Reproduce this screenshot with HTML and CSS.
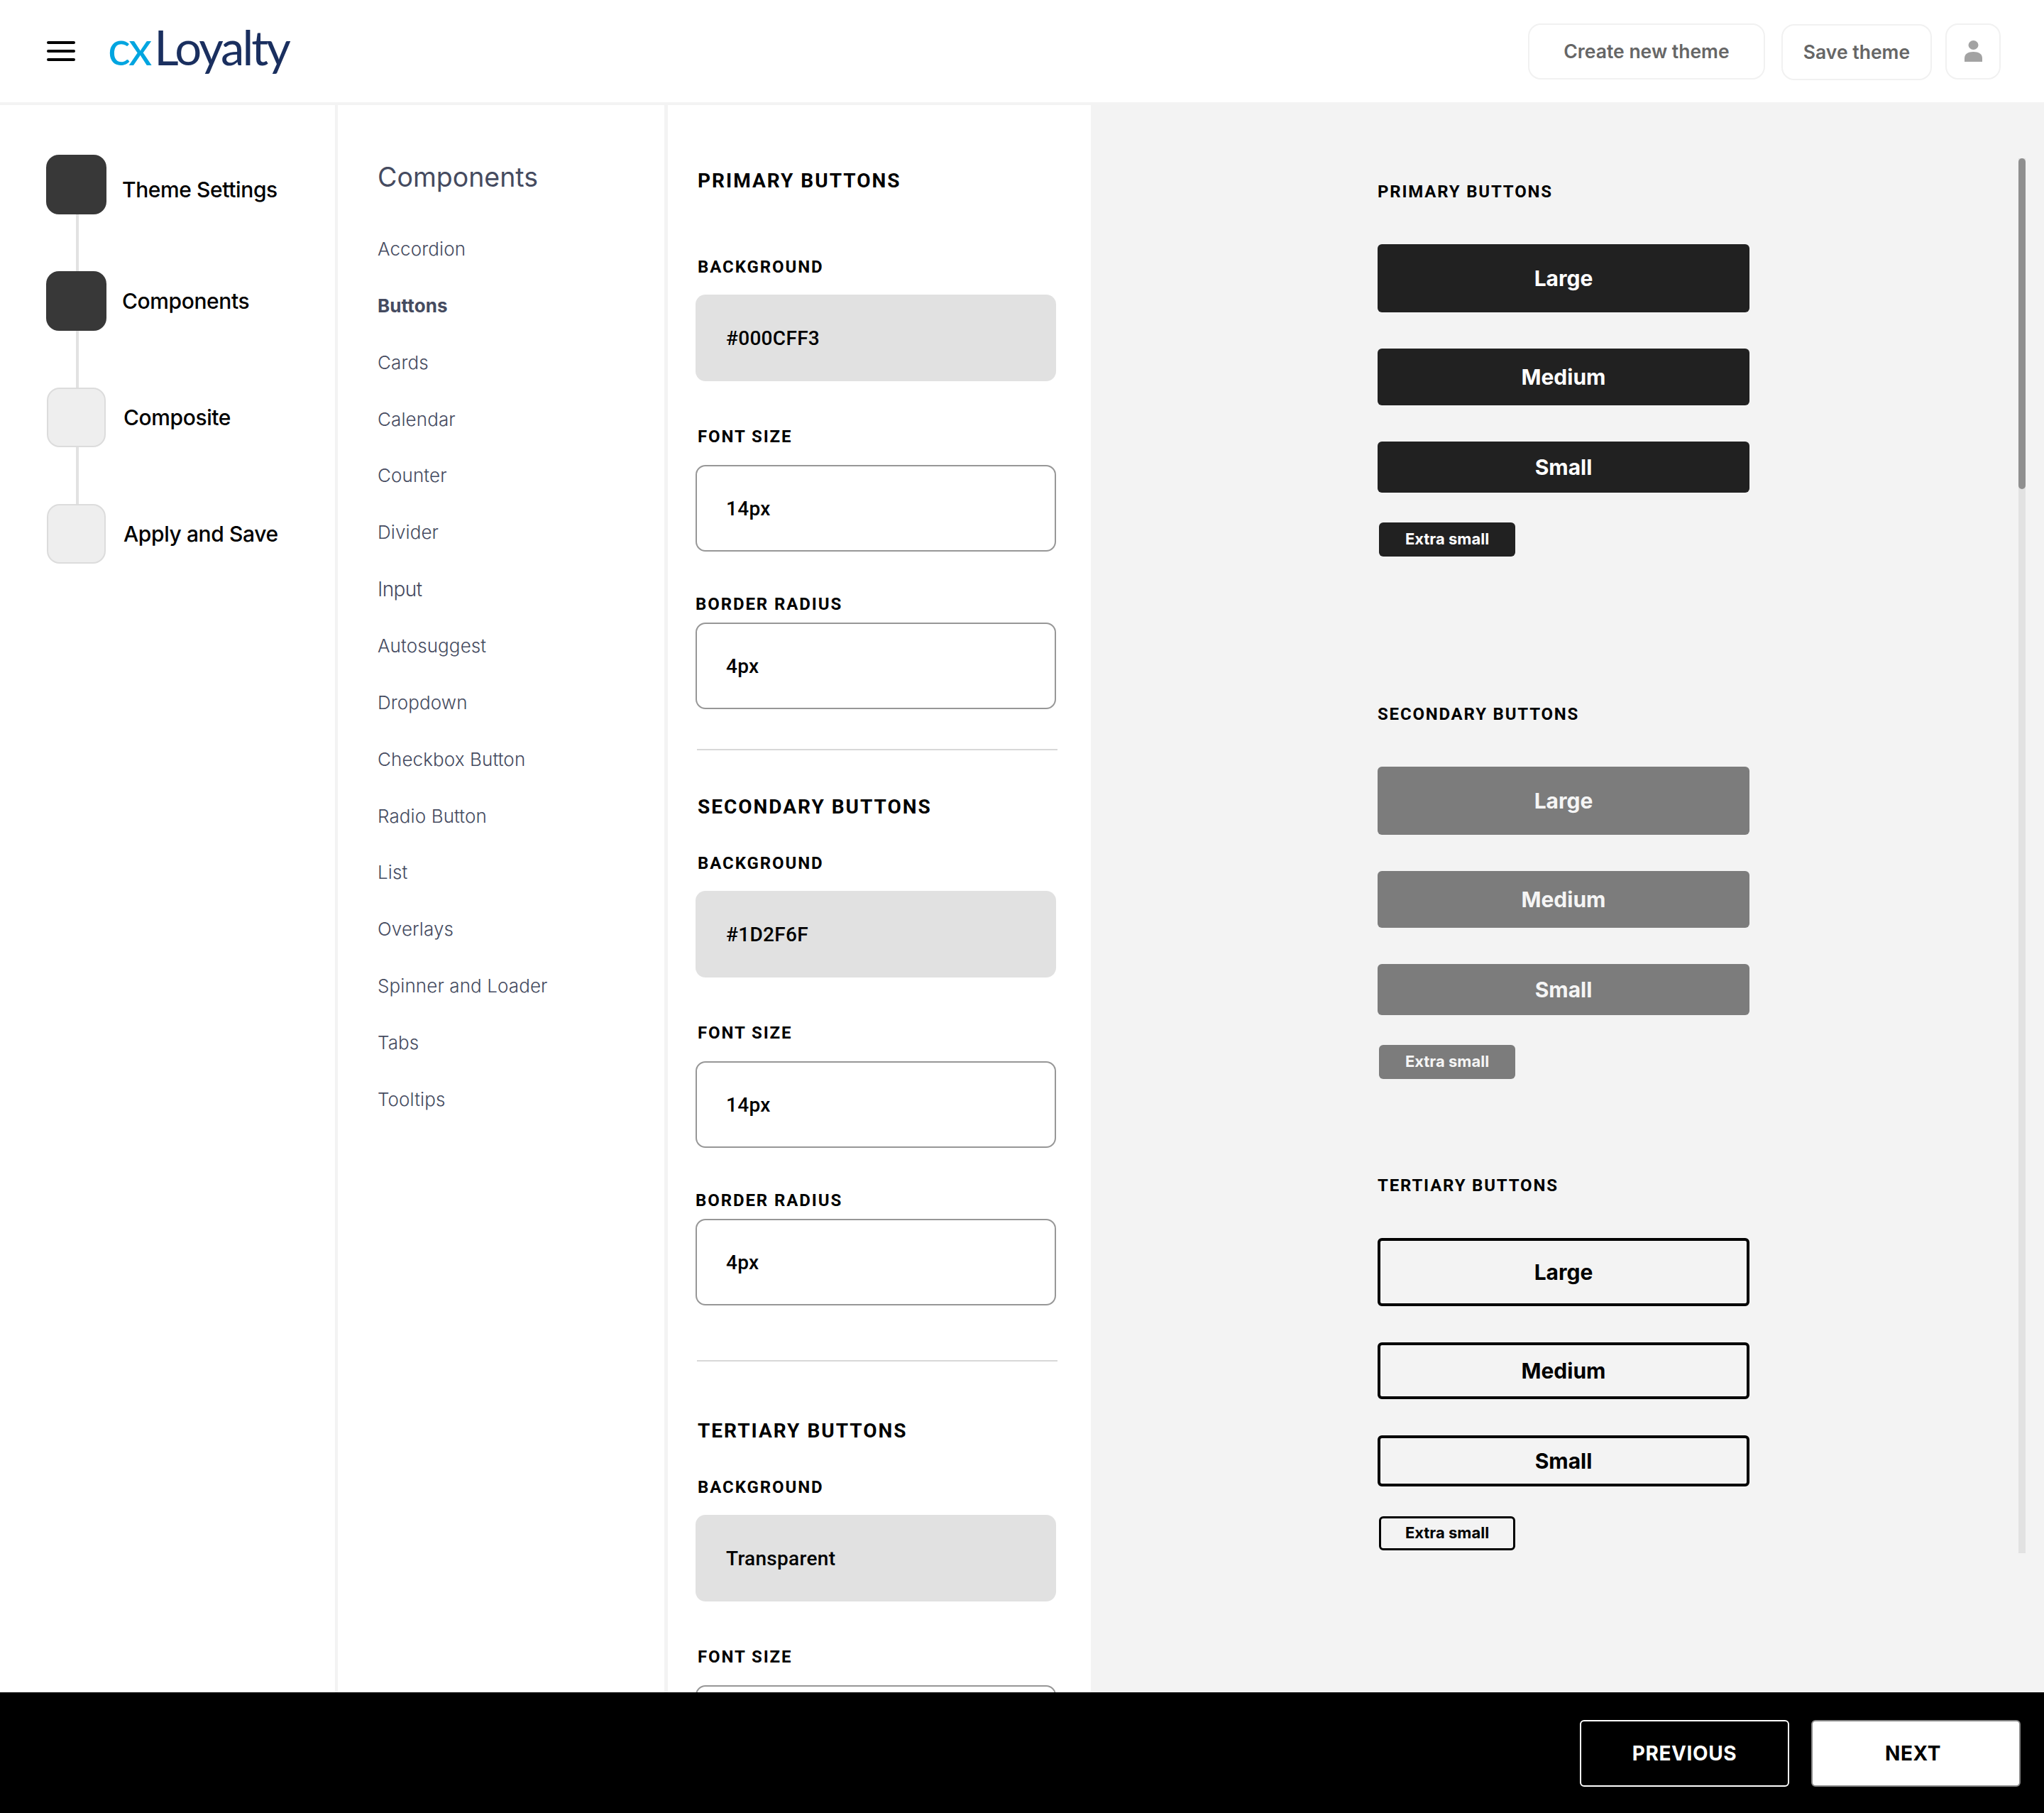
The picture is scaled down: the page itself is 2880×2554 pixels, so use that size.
FILE: index.html
```html
<!DOCTYPE html>
<html lang="en">
<head>
  <meta charset="UTF-8">
  <title>cxLoyalty Theme Builder</title>
  <link rel="stylesheet" href="styles.css">
</head>
<body>

  <header class="topbar">
    <div class="menu-icon"><span></span><span></span><span></span></div>
    <div class="logo"><span class="logo-cx">cx</span><span class="logo-name">Loyalty</span></div>
    <div class="topbar-actions">
      <button class="top-btn top-btn-create">Create new theme</button>
      <button class="top-btn top-btn-save">Save theme</button>
      <button class="top-btn top-btn-user">
        <svg width="25" height="30" viewBox="0 0 25 30"><ellipse cx="12.5" cy="6.5" rx="7" ry="6.5" fill="#a3a3a3"/><path d="M0 30 V25 C0 19 5 16 12.5 16 C20 16 25 19 25 25 V30 Z" fill="#a3a3a3"/></svg>
      </button>
    </div>
  </header>

  <main class="workspace">
    <nav class="steps">
      <div class="step step-done step-first"><div class="step-box"></div><span>Theme Settings</span></div>
      <div class="step step-done"><div class="step-box"></div><span>Components</span></div>
      <div class="step step-todo"><div class="step-box"></div><span>Composite</span></div>
      <div class="step step-todo step-last"><div class="step-box"></div><span>Apply and Save</span></div>
    </nav>

    <aside class="components">
      <h2>Components</h2>
      <ul>
        <li>Accordion</li>
        <li class="active">Buttons</li>
        <li>Cards</li>
        <li>Calendar</li>
        <li>Counter</li>
        <li>Divider</li>
        <li class="current">Input</li>
        <li>Autosuggest</li>
        <li>Dropdown</li>
        <li>Checkbox Button</li>
        <li>Radio Button</li>
        <li>List</li>
        <li>Overlays</li>
        <li>Spinner and Loader</li>
        <li>Tabs</li>
        <li>Tooltips</li>
      </ul>
    </aside>

    <section class="settings">
      <h3 class="settings-title settings-title-first">Primary buttons</h3>
      <label class="field-label">Background</label>
      <div class="field field-filled">#000CFF3</div>
      <label class="field-label">Font size</label>
      <div class="field">14px</div>
      <label class="field-label field-label-radius">Border radius</label>
      <div class="field">4px</div>
      <hr class="divider">

      <h3 class="settings-title">Secondary buttons</h3>
      <label class="field-label">Background</label>
      <div class="field field-filled">#1D2F6F</div>
      <label class="field-label">Font size</label>
      <div class="field">14px</div>
      <label class="field-label field-label-radius">Border radius</label>
      <div class="field">4px</div>
      <hr class="divider divider-wide">

      <h3 class="settings-title">Tertiary buttons</h3>
      <label class="field-label">Background</label>
      <div class="field field-filled">Transparent</div>
      <label class="field-label">Font size</label>
      <div class="field">14px</div>
    </section>

    <section class="preview">
      <h4 class="preview-title">Primary buttons</h4>
      <div class="btn-stack btn-primary">
        <button class="btn btn-lg">Large</button>
        <button class="btn btn-md">Medium</button>
        <button class="btn btn-sm">Small</button>
        <button class="btn btn-xs">Extra small</button>
      </div>

      <h4 class="preview-title preview-title-secondary">Secondary buttons</h4>
      <div class="btn-stack btn-secondary">
        <button class="btn btn-lg">Large</button>
        <button class="btn btn-md">Medium</button>
        <button class="btn btn-sm">Small</button>
        <button class="btn btn-xs">Extra small</button>
      </div>

      <h4 class="preview-title preview-title-tertiary">Tertiary buttons</h4>
      <div class="btn-stack btn-tertiary">
        <button class="btn btn-lg">Large</button>
        <button class="btn btn-md">Medium</button>
        <button class="btn btn-sm">Small</button>
        <button class="btn btn-xs">Extra small</button>
      </div>

      <div class="scroll-track"><div class="scroll-thumb"></div></div>
    </section>
  </main>

  <footer class="footer">
    <button class="footer-btn footer-btn-prev">PREVIOUS</button>
    <button class="footer-btn footer-btn-next">NEXT</button>
  </footer>

</body>
</html>
```

FILE: styles.css
```css
* {
  box-sizing: border-box;
}
html, body {
  margin: 0;
  height: 100%;
}
body {
  display: grid;
  grid-template-rows: 148px 1fr 170px;
  height: 100vh;
  overflow: hidden;
  background: #fff;
  color: #000;
  font-family: Inter, "Liberation Sans", sans-serif;
}
button {
  font-family: inherit;
  cursor: pointer;
}

/* top bar */
.topbar {
  display: flex;
  align-items: center;
  padding: 0 61px 0 66px;
  border-bottom: 4px solid #f3f3f3;
}
.menu-icon {
  display: flex;
  flex-direction: column;
  gap: 8px;
  width: 40px;
}
.menu-icon span {
  height: 4px;
  border-radius: 2px;
  background: #000;
}
.logo {
  margin: 0 0 13px 46px;
  font-family: Lato, sans-serif;
  font-size: 67px;
  line-height: 80px;
  letter-spacing: -3px;
}
.logo-cx {
  margin-right: 6px;
  color: #00a5e0;
}
.logo-name {
  color: #1a2f5f;
}
.topbar-actions {
  display: flex;
  align-items: center;
  margin-left: auto;
}
.top-btn {
  height: 79px;
  padding: 0;
  border: 2px solid #f1f1f1;
  border-radius: 18px;
  background: #fff;
  color: #666;
  font-size: 26.5px;
  font-weight: 600;
}
.top-btn-create {
  width: 334px;
}
.top-btn-save {
  width: 212px;
  margin: 2px 0 0 23px;
}
.top-btn-user {
  display: flex;
  align-items: center;
  justify-content: center;
  width: 78px;
  margin-left: 19px;
}

/* main columns */
.workspace {
  display: grid;
  grid-template-columns: 476px 465px 596px 1fr;
  min-height: 0;
}
.steps {
  display: flex;
  flex-direction: column;
  gap: 80px;
  padding: 70px 0 0 65px;
  border-right: 4px solid #f3f3f3;
}
.step {
  position: relative;
  display: flex;
  align-items: center;
  gap: 22px;
  height: 84px;
  font-size: 30px;
  font-weight: 500;
  letter-spacing: -0.4px;
}
.step-box {
  width: 85px;
  height: 84px;
  border-radius: 18px;
}
.step-done .step-box {
  background: #383838;
}
.step-todo .step-box {
  width: 83px;
  margin-left: 1px;
  border: 2px solid #dcdcdc;
  background: #eee;
}
.step-todo {
  gap: 25px;
}
.step-first span {
  padding-top: 14px;
}
.step::after {
  content: "";
  position: absolute;
  left: 42px;
  top: 84px;
  width: 4px;
  height: 80px;
  background: #e2e2e2;
}
.step-last::after {
  display: none;
}

.components {
  padding: 77px 0 0 56px;
  border-right: 5px solid #f3f3f3;
  color: #454b60;
}
.components h2 {
  margin: 0 0 56px;
  font-size: 37.5px;
  font-weight: 400;
  line-height: 50px;
}
.components ul {
  display: flex;
  flex-direction: column;
  gap: 39.87px;
  margin: 0;
  padding: 0;
  list-style: none;
  font-size: 26px;
  font-weight: 300;
  line-height: 40px;
  letter-spacing: 0.1px;
}
.components .active {
  font-weight: 700;
}
.components .current {
  font-size: 28px;
  letter-spacing: -0.6px;
}

/* settings column */
.settings {
  overflow: hidden;
  padding: 0 49px 0 39px;
  font-family: Roboto, sans-serif;
}
.settings-title {
  margin: 60px 0 43px 3px;
  font-size: 28px;
  font-weight: 700;
  line-height: 40px;
  letter-spacing: 2px;
  text-transform: uppercase;
}
.settings-title-first {
  margin-top: 87px;
  margin-bottom: 85px;
}
.field-label {
  display: block;
  margin: 62px 0 24px 3px;
  font-size: 24px;
  font-weight: 700;
  line-height: 32px;
  letter-spacing: 1.9px;
  text-transform: uppercase;
}
.settings-title + .field-label {
  margin-top: 0;
  margin-bottom: 23px;
}
.field-label-radius {
  margin: 58px 0 10px;
}
.field {
  display: flex;
  align-items: center;
  height: 122px;
  padding-left: 41px;
  border: 2px solid #979797;
  border-radius: 14px;
  font-size: 28px;
  font-weight: 500;
  letter-spacing: 0.3px;
}
.field-filled {
  border: 0;
  padding-left: 43px;
  background: #e1e1e1;
}
.divider {
  height: 2px;
  margin: 56px -2px 0 2px;
  border: 0;
  background: #d8d8d8;
}
.divider-wide {
  margin: 77px -2px 78px 2px;
}

/* preview column */
.preview {
  position: relative;
  padding: 106px 0 0 404px;
  background: #f3f3f3;
}
.preview-title {
  margin: 0 0 58px;
  font-family: Roboto, sans-serif;
  font-size: 24px;
  font-weight: 700;
  line-height: 32px;
  letter-spacing: 1.8px;
  text-transform: uppercase;
}
.preview-title-secondary {
  margin-top: 206px;
}
.preview-title-tertiary {
  margin-top: 134px;
}
.btn-stack {
  display: flex;
  flex-direction: column;
  align-items: flex-start;
  gap: 51px;
  width: 524px;
}
.btn {
  width: 100%;
  padding: 0;
  border: 0;
  border-radius: 6px;
  font-size: 30px;
  font-weight: 700;
}
.btn-lg {
  height: 96px;
}
.btn-md {
  height: 80px;
}
.btn-sm {
  height: 72px;
}
.btn-xs {
  width: 192px;
  height: 48px;
  margin: -9px 0 0 2px;
  padding-bottom: 2px;
  font-size: 22px;
}
.btn-primary .btn {
  background: #212121;
  color: #fff;
}
.btn-secondary .btn {
  background: #7c7c7c;
  color: #f5f5f5;
}
.btn-tertiary .btn {
  border: 4px solid #000;
  background: transparent;
  color: #000;
}
.btn-tertiary .btn-xs {
  border-width: 3px;
}
.scroll-track {
  position: absolute;
  top: 75px;
  left: 1307px;
  width: 10px;
  height: 1965px;
  background: #e2e2e2;
}
.scroll-thumb {
  height: 466px;
  border-radius: 5px;
  background: #8f8f8f;
}

/* footer */
.footer {
  display: flex;
  justify-content: flex-end;
  gap: 31px;
  padding: 39px 33px 0 0;
  background: #000;
}
.footer-btn {
  width: 295px;
  height: 94px;
  border-radius: 6px;
  font-size: 28px;
  font-weight: 700;
  letter-spacing: 0.6px;
}
.footer-btn-prev {
  border: 2px solid #fff;
  background: #000;
  color: #fff;
}
.footer-btn-next {
  padding-right: 14px;
  border: 2px solid #888;
  background: #fff;
  color: #000;
}
```
